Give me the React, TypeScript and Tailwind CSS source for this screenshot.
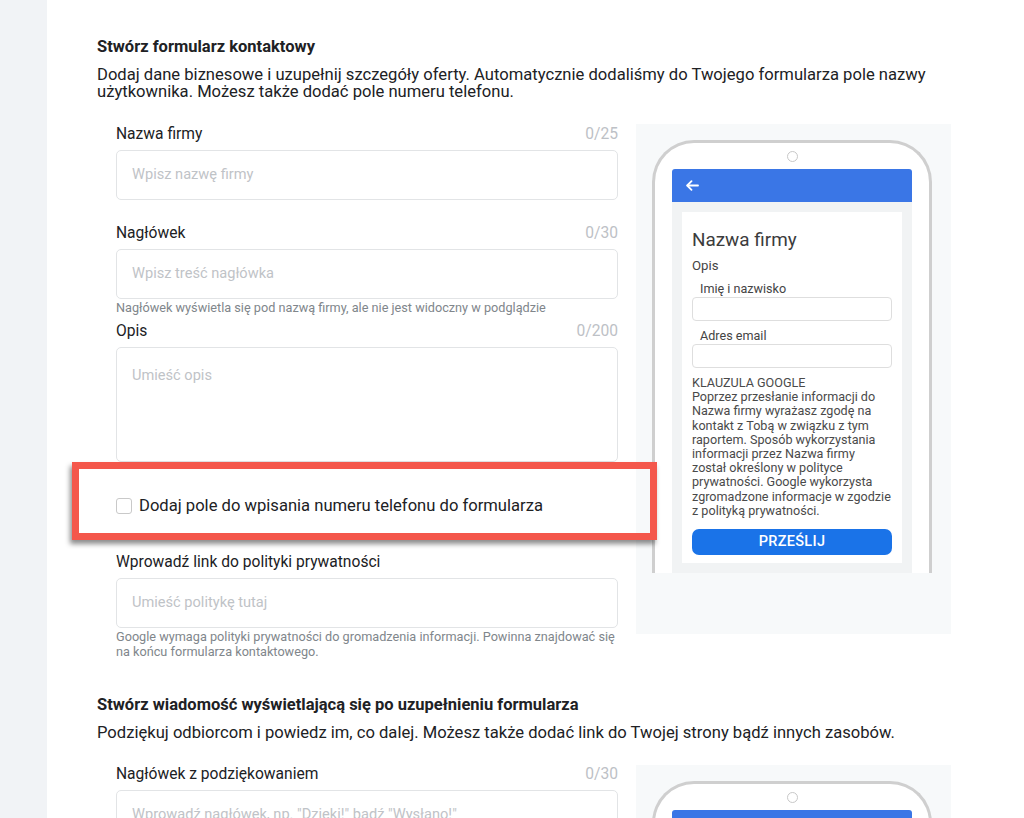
import React from "react";

const font = { fontFamily: "Roboto, 'Noto Sans', Arial, sans-serif" };

function Label({ text, count }: { text: string; count?: string }) {
  return (
    <div className="flex justify-between items-center h-[18px] mb-[7px] text-[15.6px] leading-[18px]">
      <span className="text-[#202124]">{text}</span>
      {count && <span className="text-[#bdc1c6]">{count}</span>}
    </div>
  );
}

function Input({ placeholder, h = "h-[50px]", top = false }: { placeholder: string; h?: string; top?: boolean }) {
  return (
    <div
      className={`${h} border border-[#e2e4e6] rounded-[5px] px-[15px] flex ${top ? "items-start pt-[17px]" : "items-center"} text-[14.6px] text-[#bfc3c7]`}
    >
      {placeholder}
    </div>
  );
}

function Helper({ children }: { children: React.ReactNode }) {
  return <div className="text-[12.7px] leading-[15px] text-[#80868b]">{children}</div>;
}

function Arrow() {
  return (
    <svg width="13" height="11" viewBox="0 0 13 11" fill="none" stroke="white" strokeWidth="1.8" strokeLinecap="round" strokeLinejoin="round">
      <path d="M12 5.5H1.5" />
      <path d="M5.5 1.2L1.2 5.5L5.5 9.8" />
    </svg>
  );
}

function Phone({ full = true }: { full?: boolean }) {
  return (
    <div className="bg-[#f7f9fa] w-[315px] h-[510px] pt-[16px] pl-[16px]">
      <div className="w-[280px] h-[433px] border-[3px] border-b-0 border-[#cfcfcf] rounded-t-[42px] bg-white flex flex-col items-center">
        <div className="w-[11px] h-[11px] rounded-full border border-[#c8c8c8] mt-[8px]" />
        <div className="w-[240px] mt-[7px] h-[33px] bg-[#3a76e6] rounded-t-[3px] flex items-center pl-[14px]">
          {full && <Arrow />}
        </div>
        <div className="w-[240px] flex-1 bg-[#f1f3f4] p-[10px]">
          {full && (
            <div className="bg-white h-full px-[10px] pt-[17px] text-[#444]">
              <div className="text-[18.9px] leading-[22px] text-[#3c3c3c]">Nazwa firmy</div>
              <div className="text-[13.2px] leading-[16px] mt-[7px]">Opis</div>
              <div className="text-[12.6px] leading-[15px] mt-[7px] pl-[8px]">Imię i nazwisko</div>
              <div className="h-[24px] border border-[#dedede] rounded-[4px] mt-[1px]" />
              <div className="text-[12.6px] leading-[15px] mt-[7px] pl-[8px]">Adres email</div>
              <div className="h-[24px] border border-[#dedede] rounded-[4px] mt-[1px]" />
              <div className="text-[12.6px] leading-[14.2px] mt-[8px] text-[#4a4a4a] whitespace-nowrap">
                <div>KLAUZULA GOOGLE</div>
                <div>Poprzez przesłanie informacji do</div>
                <div>Nazwa firmy wyrażasz zgodę na</div>
                <div>kontakt z Tobą w związku z tym</div>
                <div>raportem. Sposób wykorzystania</div>
                <div>informacji przez Nazwa firmy</div>
                <div>został określony w polityce</div>
                <div>prywatności. Google wykorzysta</div>
                <div>zgromadzone informacje w zgodzie</div>
                <div>z polityką prywatności.</div>
              </div>
              <div className="mt-[11px] h-[26px] bg-[#1a73e8] rounded-[7px] flex items-center justify-center text-white text-[14.5px] font-medium tracking-[0.3px]">
                PRZEŚLIJ
              </div>
            </div>
          )}
        </div>
      </div>
    </div>
  );
}

export default function App() {
  return (
    <div className="flex w-[1024px] h-[818px] overflow-hidden bg-white" style={font}>
      <div className="w-[47px] shrink-0 bg-[#f1f3f6]" />
      <div className="flex-1 pl-[50px] pt-[37px]">
        {/* Section 1 */}
        <div className="text-[16.5px] leading-[20px] font-bold text-[#202124]">Stwórz formularz kontaktowy</div>
        <div className="mt-[9px] text-[16.6px] leading-[17px] text-[#202124] whitespace-nowrap">
          Dodaj dane biznesowe i uzupełnij szczegóły oferty. Automatycznie dodaliśmy do Twojego formularza pole nazwy
          <br />
          użytkownika. Możesz także dodać pole numeru telefonu.
        </div>
        <div className="flex items-start mt-[25px]">
          <div className="ml-[19px] w-[502px] relative z-10">
            <Label text="Nazwa firmy" count="0/25" />
            <Input placeholder="Wpisz nazwę firmy" />
            <div className="h-[24px]" />
            <Label text="Nagłówek" count="0/30" />
            <Input placeholder="Wpisz treść nagłówka" />
            <div className="pt-[1px] h-[23px]">
              <Helper>Nagłówek wyświetla się pod nazwą firmy, ale nie jest widoczny w podglądzie</Helper>
            </div>
            <Label text="Opis" count="0/200" />
            <Input placeholder="Umieść opis" h="h-[115px]" top />
            <div className="relative h-[91px] flex items-center">
              <div className="absolute left-[-44px] top-[0px] w-[585px] h-[78px] border-[7px] border-[#f4574b] shadow-[-2px_4px_5px_rgba(0,0,0,0.45)]" />
              <div className="flex items-center gap-[7px] -mt-[3px]">
                <div className="w-[16px] h-[16px] border border-[#c9c9c9] rounded-[3px] bg-white" />
                <span className="text-[16.6px] leading-[20px] text-[#202124]">Dodaj pole do wpisania numeru telefonu do formularza</span>
              </div>
            </div>
            <Label text="Wprowadź link do polityki prywatności" />
            <Input placeholder="Umieść politykę tutaj" />
            <div className="pt-[1px]">
              <Helper>
                Google wymaga polityki prywatności do gromadzenia informacji. Powinna znajdować się
                <br />
                na końcu formularza kontaktowego.
              </Helper>
            </div>
          </div>
          <div className="ml-[18px] -mt-[1px]">
            <Phone />
          </div>
        </div>

        {/* Section 2 */}
        <div className="mt-[36px] text-[16.5px] leading-[20px] font-bold text-[#202124]">
          Stwórz wiadomość wyświetlającą się po uzupełnieniu formularza
        </div>
        <div className="mt-[9px] text-[16.6px] leading-[17px] text-[#202124] whitespace-nowrap">
          Podziękuj odbiorcom i powiedz im, co dalej. Możesz także dodać link do Twojej strony bądź innych zasobów.
        </div>
        <div className="flex items-start mt-[24px]">
          <div className="ml-[19px] w-[502px]">
            <Label text="Nagłówek z podziękowaniem" count="0/30" />
            <Input placeholder={'Wprowadź nagłówek, np. "Dzięki!" bądź "Wysłano!"'} />
          </div>
          <div className="ml-[18px]">
            <Phone full={false} />
          </div>
        </div>
      </div>
    </div>
  );
}
